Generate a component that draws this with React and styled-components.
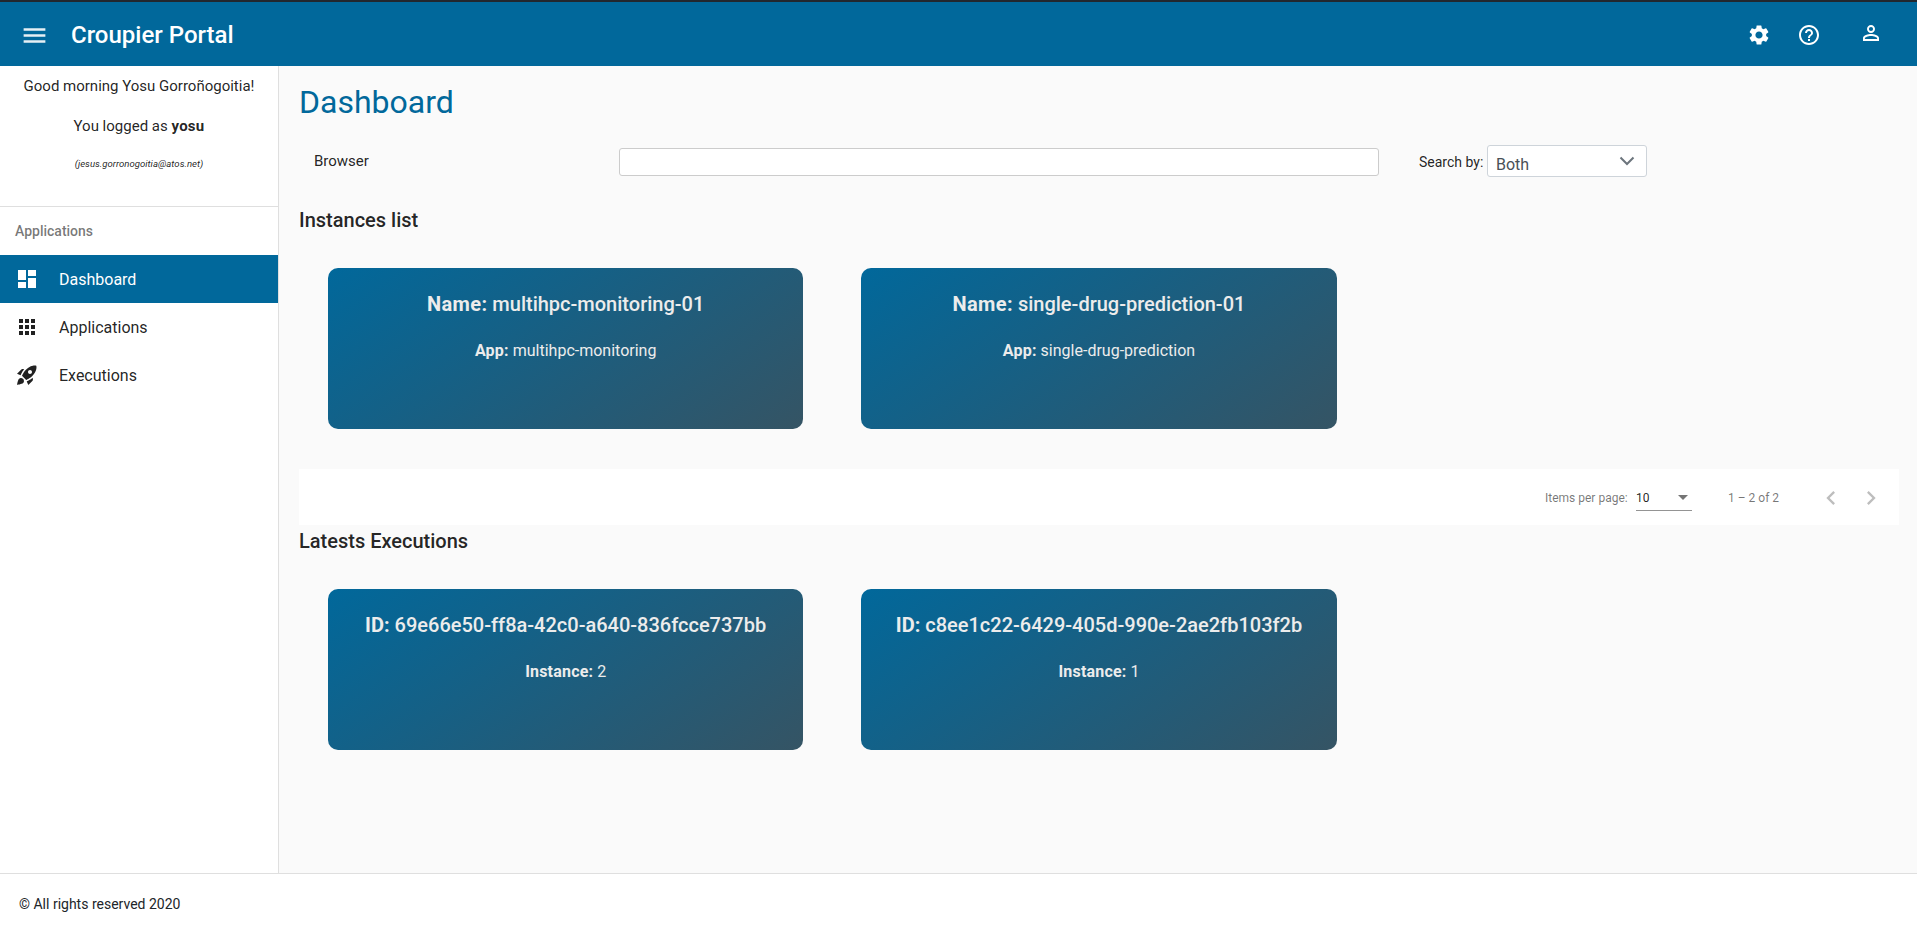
import React from "react";
import styled, { createGlobalStyle } from "styled-components";
import {
  MdMenu,
  MdSettings,
  MdHelpOutline,
  MdPersonOutline,
  MdDashboard,
  MdApps,
  MdRocketLaunch,
  MdChevronLeft,
  MdChevronRight,
} from "react-icons/md";

const primary = "#01689b";

const GlobalStyle = createGlobalStyle`
  * { box-sizing: border-box; }
  body {
    margin: 0;
    background: #fafafa;
    color: rgba(0, 0, 0, 0.87);
    font-family: Roboto, "Liberation Sans", sans-serif;
    overflow: hidden;
  }
  h1, h2, h3, p { margin: 0; }
`;

const Page = styled.div`
  display: flex;
  flex-direction: column;
  height: 100vh;
  border-top: 2px solid #22272e;
`;

const TopBar = styled.header`
  display: flex;
  align-items: center;
  flex: none;
  height: 64px;
  padding: 0 34px 0 20px;
  background: ${primary};
  color: #fff;
`;

const MenuButton = styled.span`
  display: flex;
  margin-top: 3px;
  opacity: 0.9;
`;

const Brand = styled.h1`
  margin-left: 22px;
  padding-top: 2px;
  font-size: 24px;
  line-height: 32px;
  font-weight: 500;
  flex: 1;
`;

const Action = styled.span`
  display: flex;
  margin-left: ${(p) => p.$gap}px;
  margin-bottom: ${(p) => p.$lift || 0}px;
  margin-top: 2px;
`;

const Body = styled.div`
  display: flex;
  flex: 1;
  min-height: 0;
`;

const Sidebar = styled.aside`
  flex: none;
  width: 279px;
  background: #fff;
  border-right: 1px solid #dfdfdf;
`;

const UserInfo = styled.div`
  height: 141px;
  padding: 10px 0 0;
  border-bottom: 1px solid #dfdfdf;
  text-align: center;
  font-size: 15px;
`;

const UserLine = styled.p`
  line-height: 20px;
  margin-bottom: 20px;

  b { letter-spacing: 0.25px; }
`;

const Email = styled.p`
  font-size: 9.6px;
  line-height: 16px;
  font-style: italic;
`;

const NavTitle = styled.h3`
  height: 48px;
  padding-left: 15px;
  font-size: 14px;
  line-height: 49px;
  font-weight: 500;
  color: rgba(0, 0, 0, 0.54);
`;

const NavItem = styled.a`
  display: flex;
  align-items: center;
  height: 48px;
  padding-left: 15px;
  gap: 20px;
  font-size: 16px;
  background: ${(p) => (p.$active ? primary : "transparent")};
  color: ${(p) => (p.$active ? "#fff" : "rgba(0,0,0,0.87)")};
`;

const Main = styled.main`
  flex: 1;
  padding: 0 18px 0 20px;
`;

const PageTitle = styled.h1`
  padding-top: 16px;
  font-size: 32px;
  line-height: 40px;
  font-weight: 400;
  color: ${primary};
`;

const SearchRow = styled.div`
  display: flex;
  align-items: center;
  height: 32px;
  margin-top: 23px;
  padding-left: 15px;
`;

const SearchLabel = styled.label`
  width: 305px;
  font-size: 15px;
`;

const SearchInput = styled.input`
  width: 760px;
  height: 28px;
  margin-top: 2px;
  border: 1px solid #ccc;
  border-radius: 3px;
  background: #fff;
  outline: none;
`;

const SelectLabel = styled.span`
  width: 68px;
  margin-left: 40px;
  padding-top: 2px;
  font-size: 14px;
  white-space: nowrap;
`;

const Select = styled.div`
  display: flex;
  justify-content: space-between;
  width: 160px;
  height: 32px;
  padding: 8px 11px 0 8px;
  border: 1px solid #ced4da;
  border-radius: 3px;
  background: #fff;
  color: #495057;
  font-size: 16px;
  line-height: 22px;
`;

const SectionTitle = styled.h2`
  height: 32px;
  font-size: 20px;
  line-height: 32px;
  font-weight: 500;
  margin-top: ${(p) => p.$top}px;
`;

const CardGrid = styled.div`
  display: grid;
  grid-template-columns: repeat(3, 1fr);
  margin-top: 32px;
`;

const Card = styled.article`
  height: 161px;
  margin: 0 29px;
  padding-top: 20px;
  border-radius: 10px;
  text-align: center;
  color: #ececec;
  background: linear-gradient(145deg, ${primary}, #355464);
`;

const CardTitle = styled.h2`
  font-size: 20px;
  line-height: 32px;
  font-weight: 500;
  white-space: nowrap;

  b { letter-spacing: ${(p) => (p.$wide ? "0.35px" : "normal")}; }
`;

const CardText = styled.p`
  margin-top: 19px;
  font-size: 16px;
  line-height: 24px;

  b { letter-spacing: 0.2px; }
`;

const Paginator = styled.div`
  display: flex;
  align-items: center;
  height: 56px;
  margin-top: 40px;
  padding: 2px 0 0 1246px;
  background: #fff;
  color: rgba(0, 0, 0, 0.54);
  font-size: 12px;
  white-space: nowrap;
`;

const PageLabel = styled.span`
  width: 91px;
`;

const PageSize = styled.span`
  display: flex;
  align-items: center;
  justify-content: space-between;
  width: 56px;
  height: 25px;
  margin-right: 36px;
  padding: 0 4px 0 0;
  border-bottom: 1px solid rgba(0, 0, 0, 0.42);
  color: rgba(0, 0, 0, 0.87);
`;

const Caret = styled.i`
  border: 5px solid transparent;
  border-top-color: rgba(0, 0, 0, 0.54);
  border-bottom: 0;
`;

const PageRange = styled.span`
  width: 83px;
`;

const PageArrow = styled.span`
  display: flex;
  justify-content: center;
  width: 40px;
  color: rgba(0, 0, 0, 0.26);
`;

const Footer = styled.footer`
  flex: none;
  height: 57px;
  padding-left: 19px;
  border-top: 1px solid #dfdfdf;
  background: #fff;
  color: #212529;
  font-size: 14px;
  line-height: 61px;
`;

const instances = [
  { name: "multihpc-monitoring-01", app: "multihpc-monitoring" },
  { name: "single-drug-prediction-01", app: "single-drug-prediction" },
];

const executions = [
  { id: "69e66e50-ff8a-42c0-a640-836fcce737bb", instance: 2 },
  { id: "c8ee1c22-6429-405d-990e-2ae2fb103f2b", instance: 1 },
];

function InfoCard({ titleLabel, title, textLabel, text, wide }) {
  return (
    <Card>
      <CardTitle $wide={wide}><b>{titleLabel}:</b> {title}</CardTitle>
      <CardText><b>{textLabel}:</b> {text}</CardText>
    </Card>
  );
}

export default function App() {
  return (
    <Page>
      <GlobalStyle />
      <TopBar>
        <MenuButton><MdMenu size={29} /></MenuButton>
        <Brand>Croupier Portal</Brand>
        <Action $gap={0}><MdSettings size={24} /></Action>
        <Action $gap={26}><MdHelpOutline size={24} /></Action>
        <Action $gap={38} $lift={4}><MdPersonOutline size={24} /></Action>
      </TopBar>
      <Body>
        <Sidebar>
          <UserInfo>
            <UserLine>Good morning Yosu Gorroñogoitia!</UserLine>
            <UserLine>You logged as <b>yosu</b></UserLine>
            <Email>(jesus.gorronogoitia@atos.net)</Email>
          </UserInfo>
          <NavTitle>Applications</NavTitle>
          <NavItem $active><MdDashboard size={24} />Dashboard</NavItem>
          <NavItem><MdApps size={24} />Applications</NavItem>
          <NavItem><MdRocketLaunch size={24} />Executions</NavItem>
        </Sidebar>
        <Main>
          <PageTitle>Dashboard</PageTitle>
          <SearchRow>
            <SearchLabel>Browser</SearchLabel>
            <SearchInput />
            <SelectLabel>Search by:</SelectLabel>
            <Select>
              Both
              <svg width="16" height="16" viewBox="0 0 16 16" fill="none" stroke="#6c757d" strokeWidth="2">
                <path d="M1.5 3.5 8 10 14.5 3.5" />
              </svg>
            </Select>
          </SearchRow>
          <SectionTitle $top={27}>Instances list</SectionTitle>
          <CardGrid>
            {instances.map((i) => (
              <InfoCard key={i.name} wide titleLabel="Name" title={i.name} textLabel="App" text={i.app} />
            ))}
          </CardGrid>
          <Paginator>
            <PageLabel>Items per page:</PageLabel>
            <PageSize>10<Caret /></PageSize>
            <PageRange>1 – 2 of 2</PageRange>
            <PageArrow><MdChevronLeft size={28} /></PageArrow>
            <PageArrow><MdChevronRight size={28} /></PageArrow>
          </Paginator>
          <SectionTitle $top={0}>Latests Executions</SectionTitle>
          <CardGrid>
            {executions.map((e) => (
              <InfoCard key={e.id} titleLabel="ID" title={e.id} textLabel="Instance" text={e.instance} />
            ))}
          </CardGrid>
        </Main>
      </Body>
      <Footer>© All rights reserved 2020</Footer>
    </Page>
  );
}
